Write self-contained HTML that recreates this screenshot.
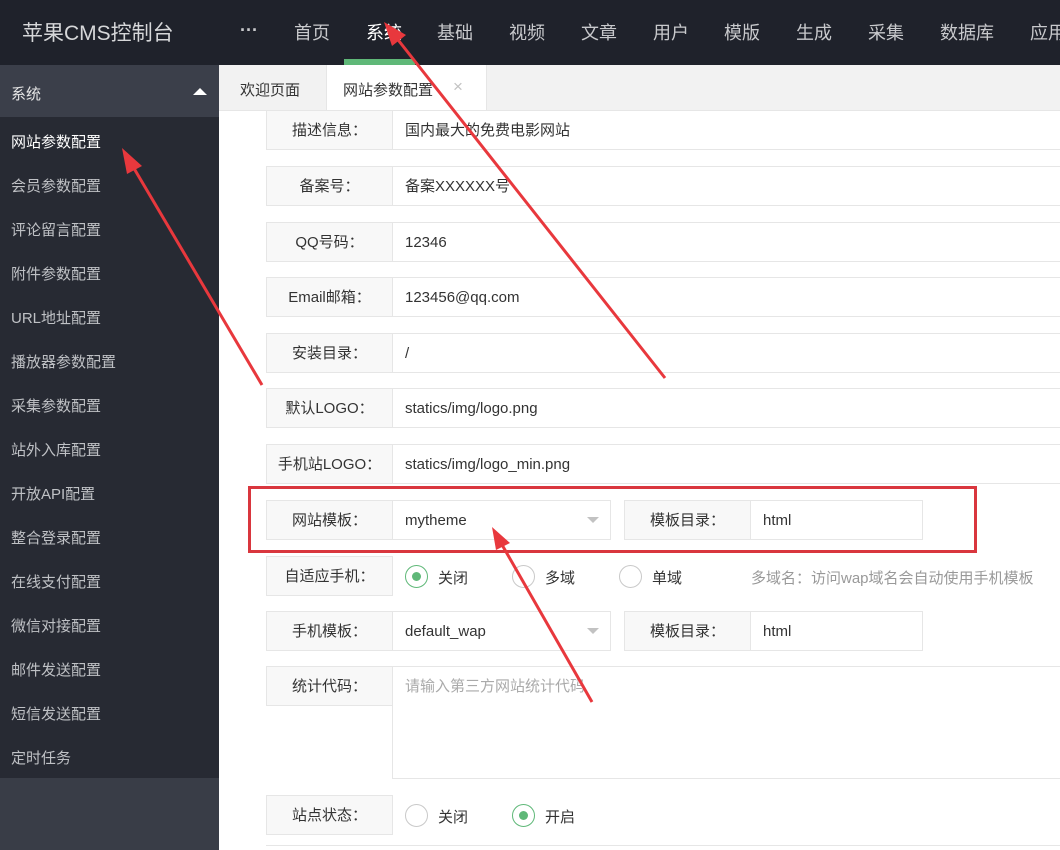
<!DOCTYPE html><html><head><meta charset="utf-8"><style>
*{margin:0;padding:0;box-sizing:border-box}
body{width:1060px;height:850px;overflow:hidden;position:relative;background:#fff;font-family:"Liberation Sans","Noto Sans CJK SC",sans-serif;font-size:15px;color:#333}
.a{position:absolute;white-space:nowrap}
#hd{left:0;top:0;width:1060px;height:65px;background:#1f222b}
.nav{top:19px;color:#c8c9cc;font-size:18px}
#sb{left:0;top:65px;width:219px;height:785px;background:#393d47}
.si{left:11px;color:#bfc1c5;font-size:15px}
.lb{left:266px;width:127px;height:40px;background:#f8f8f8;border:1px solid #e6e6e6;text-align:center;line-height:40px;font-size:15px}
.in{height:40px;border:1px solid #e6e6e6;padding-left:12px;line-height:40px;background:#fff}
.rd{width:23px;height:23px;border:1px solid #c9c9c9;border-radius:50%;background:#fff}
.rd.on{border-color:#5fb878}
.rd.on:after{content:"";position:absolute;left:6px;top:6px;width:9px;height:9px;border-radius:50%;background:#5fb878}
.car{width:0;height:0;border-left:6px solid transparent;border-right:6px solid transparent;border-top:6px solid #c2c2c2}
</style></head><body>
<div id="hd" class="a"></div>
<div class="a" style="left:22px;top:17px;color:#d6d7d9;font-size:21px">苹果CMS控制台</div>
<div class="a nav" style="left:240px;top:20px;font-weight:bold">···</div>
<div class="a nav" style="left:294px">首页</div>
<div class="a nav" style="left:366px;color:#fff">系统</div>
<div class="a" style="left:344px;top:59px;width:71px;height:6px;background:#5fb878"></div>
<div class="a nav" style="left:437px">基础</div>
<div class="a nav" style="left:509px">视频</div>
<div class="a nav" style="left:581px">文章</div>
<div class="a nav" style="left:653px">用户</div>
<div class="a nav" style="left:724px">模版</div>
<div class="a nav" style="left:796px">生成</div>
<div class="a nav" style="left:868px">采集</div>
<div class="a nav" style="left:940px">数据库</div>
<div class="a nav" style="left:1030px">应用</div>
<div id="sb" class="a"></div>
<div class="a" style="left:0;top:65px;width:219px;height:52px;background:#3b3f4a"></div>
<div class="a" style="left:0;top:117px;width:219px;height:661px;background:#272a33"></div>
<div class="a si" style="top:83px;color:#e6e6e6">系统</div>
<div class="a" style="left:193px;top:88px;width:0;height:0;border-left:7px solid transparent;border-right:7px solid transparent;border-bottom:7px solid #fff"></div>
<div class="a si" style="top:131px;color:#fff">网站参数配置</div>
<div class="a si" style="top:175px">会员参数配置</div>
<div class="a si" style="top:219px">评论留言配置</div>
<div class="a si" style="top:263px">附件参数配置</div>
<div class="a si" style="top:307px">URL地址配置</div>
<div class="a si" style="top:351px">播放器参数配置</div>
<div class="a si" style="top:395px">采集参数配置</div>
<div class="a si" style="top:439px">站外入库配置</div>
<div class="a si" style="top:483px">开放API配置</div>
<div class="a si" style="top:527px">整合登录配置</div>
<div class="a si" style="top:571px">在线支付配置</div>
<div class="a si" style="top:615px">微信对接配置</div>
<div class="a si" style="top:659px">邮件发送配置</div>
<div class="a si" style="top:703px">短信发送配置</div>
<div class="a si" style="top:747px">定时任务</div>
<div class="a" style="left:219px;top:65px;width:841px;height:46px;background:#f2f2f2;border-bottom:1px solid #e6e6e6"></div>
<div class="a" style="left:240px;top:79px;font-size:15px">欢迎页面</div>
<div class="a" style="left:326px;top:65px;width:161px;height:47px;background:#fff;border-left:1px solid #e6e6e6;border-right:1px solid #e6e6e6"></div>
<div class="a" style="left:343px;top:79px;font-size:15px">网站参数配置</div>
<div class="a" style="left:453px;top:77px;color:#c2c2c2;font-size:17px">×</div>

<div class="a lb" style="top:110px">描述信息：</div><div class="a in" style="left:392px;top:110px;width:670px">国内最大的免费电影网站</div>
<div class="a lb" style="top:166px">备案号：</div><div class="a in" style="left:392px;top:166px;width:670px">备案XXXXXX号</div>
<div class="a lb" style="top:222px">QQ号码：</div><div class="a in" style="left:392px;top:222px;width:670px">12346</div>
<div class="a lb" style="top:277px">Email邮箱：</div><div class="a in" style="left:392px;top:277px;width:670px">123456@qq.com</div>
<div class="a lb" style="top:333px">安装目录：</div><div class="a in" style="left:392px;top:333px;width:670px">/</div>
<div class="a lb" style="top:388px">默认LOGO：</div><div class="a in" style="left:392px;top:388px;width:670px">statics/img/logo.png</div>
<div class="a lb" style="top:444px">手机站LOGO：</div><div class="a in" style="left:392px;top:444px;width:670px">statics/img/logo_min.png</div>

<div class="a lb" style="top:500px">网站模板：</div><div class="a in" style="left:392px;top:500px;width:219px">mytheme</div>
<div class="a car" style="left:587px;top:517px"></div>
<div class="a lb" style="left:624px;top:500px">模板目录：</div><div class="a in" style="left:750px;top:500px;width:173px">html</div>
<div class="a" style="left:248px;top:486px;width:729px;height:67px;border:3px solid #d9363e"></div>

<div class="a lb" style="top:556px">自适应手机：</div>
<div class="a rd on" style="left:405px;top:565px"></div><div class="a" style="left:438px;top:567px">关闭</div>
<div class="a rd" style="left:512px;top:565px"></div><div class="a" style="left:545px;top:567px">多域</div>
<div class="a rd" style="left:619px;top:565px"></div><div class="a" style="left:652px;top:567px">单域</div>
<div class="a" style="left:751px;top:567px;color:#999">多域名：访问wap域名会自动使用手机模板</div>

<div class="a lb" style="top:611px">手机模板：</div><div class="a in" style="left:392px;top:611px;width:219px">default_wap</div>
<div class="a car" style="left:587px;top:628px"></div>
<div class="a lb" style="left:624px;top:611px">模板目录：</div><div class="a in" style="left:750px;top:611px;width:173px">html</div>

<div class="a lb" style="top:666px">统计代码：</div>
<div class="a" style="left:392px;top:666px;width:670px;height:113px;border:1px solid #e6e6e6;padding:8px 12px;color:#aaa">请输入第三方网站统计代码</div>

<div class="a lb" style="top:795px">站点状态：</div>
<div class="a rd" style="left:405px;top:804px"></div><div class="a" style="left:438px;top:806px">关闭</div>
<div class="a rd on" style="left:512px;top:804px"></div><div class="a" style="left:545px;top:806px">开启</div>
<div class="a" style="left:266px;top:845px;width:794px;height:5px;border-top:1px solid #e6e6e6"></div>

<svg class="a" style="left:0;top:0" width="1060" height="850">
<g stroke="#e8383d" stroke-width="3" fill="#e8383d">
<line x1="262" y1="385" x2="132" y2="165"/>
<polygon points="122,148 142,166 127,174" stroke="none"/>
<line x1="665" y1="378" x2="395" y2="36"/>
<polygon points="384,22 406,35 392,46" stroke="none"/>
<line x1="592" y1="702" x2="501" y2="543"/>
<polygon points="492,527 510,543 496,550" stroke="none"/>
</g></svg>
</body></html>
